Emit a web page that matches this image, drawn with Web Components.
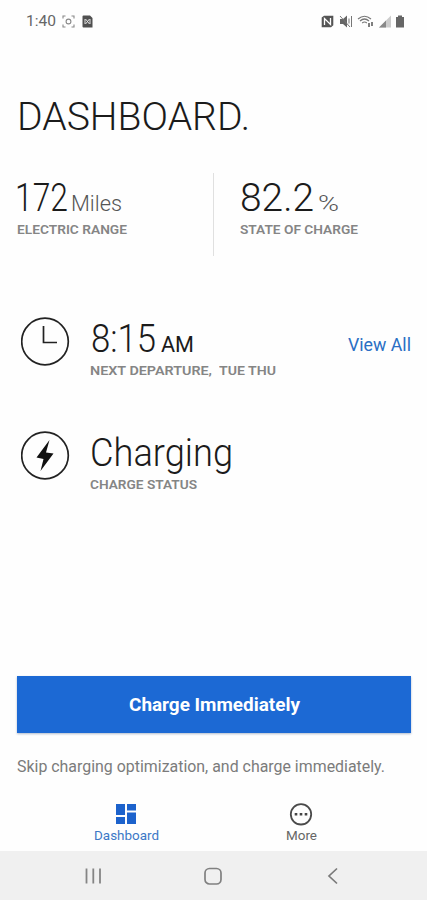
<!DOCTYPE html>
<html lang="en">
<head>
<meta charset="utf-8">
<meta name="viewport" content="width=device-width, initial-scale=1">
<title>Dashboard</title>
<style>
  html, body { margin: 0; height: 100%; }
  body { font-family: Roboto, "Liberation Sans", sans-serif; background: #fefefe; }
</style>
</head>
<body>
<charge-app></charge-app>

<script>
// Text set to a given width, so the proportions stay close to the brand typeface
class FitText extends HTMLElement {
  constructor() {
    super();
    this.attachShadow({ mode: 'open' });

    this.shadowRoot.innerHTML = `
      <style>
        :host { display: inline-block; white-space: nowrap; flex: none; }
        span { display: inline-block; transform-origin: 0 50%; }
      </style><span><slot></slot></span>`;
  }

  connectedCallback() {
    const span = this.shadowRoot.querySelector('span');
    const width = Number(this.getAttribute('width'));
    const natural = span.getBoundingClientRect().width;
    if (!width || !natural) return;

    this.style.width = `${width}px`;
    span.style.transform = `scaleX(${width / natural})`;
  }
}

class StatusBar extends HTMLElement {
  constructor() {
    super();
    this.attachShadow({ mode: 'open' });

    this.shadowRoot.innerHTML = `
      <style>
        :host {
          display: flex;
          justify-content: space-between;
          align-items: center;
          height: 42px;
          padding: 0 22px 0 26px;
          box-sizing: border-box;
          color: #666;
          font-size: 15px;
          line-height: 20px;
        }
        div { display: flex; align-items: center; gap: 6px; }
        .right { gap: 4.500px; }
        svg { display: block; }
      </style>
      <div>
        <fit-text width="30">1:40</fit-text>
        <svg width="13" height="13" viewBox="0 0 13 13" fill="none" stroke="#888" stroke-width="1.1">
          <path d="M1 3.5V1h2.500M9.500 1H12v2.500M12 9.500V12H9.500M3.500 12H1V9.500"/>
          <circle cx="6.500" cy="6.500" r="2.400"/>
        </svg>
        <svg style="margin-left:1px" width="11" height="13" viewBox="0 0 11 13">
          <path d="M1.500 .5H8L10.500 3v9.500h-9A1 1 0 0 1 .5 11.500v-10a1 1 0 0 1 1-1z" fill="#505050"/>
          <path d="M3.500 4l4 5M7.500 4l-4 5M3 4v5M8 4v5" stroke="#eee" stroke-width=".9"/>
        </svg>
      </div>
      <div class="right">
        <svg width="13" height="13" viewBox="0 0 13 13">
          <path d="M3 .7h9.300v9.600L10 12.300H.7V2.500z" fill="#555"/>
          <path d="M3.500 10V3.500l6 6V3" fill="none" stroke="#fff" stroke-width="1.300"/>
        </svg>
        <svg width="14" height="13" viewBox="0 0 14 13">
          <path d="M1 4h3l4-3.500v12L4 9H1z" fill="#666"/>
          <path d="M1 1l10 11M10 3.500v5M12.500 1v11" fill="none" stroke="#777" stroke-width="1"/>
        </svg>
        <svg width="17" height="13" viewBox="0 0 17 13" fill="none" stroke="#777" stroke-width="1.200">
          <path d="M1 4q6.500-5.500 13 0M3 6q4.500-4 9 0M5.200 8q2.300-2 4.600 0"/>
          <path d="M12 8v4M15 7v4" stroke="#555" stroke-width="1.500"/>
        </svg>
        <svg width="12" height="13" viewBox="0 0 12 13">
          <path d="M12 .5v12H0z" fill="#ccc"/>
          <path d="M7 5.500v7H0z" fill="#888"/>
        </svg>
        <svg width="10" height="13" viewBox="0 0 10 13">
          <path d="M3 .5h4v1.500h2v10.500H1V2h2z" fill="#666"/>
        </svg>
      </div>
    `;
  }
}

class MetricBlock extends HTMLElement {
  constructor() {
    super();
    this.attachShadow({ mode: 'open' });

    this.shadowRoot.innerHTML = `
      <style>
        :host { display: flex; flex-direction: column; gap: 3px; }
        .value {
          display: flex;
          align-items: baseline;
          height: 40px;
          color: #1b1b1b;
          font-size: 38px;
          font-weight: 300;
          line-height: 40px;
        }
        .label {
          display: flex;
          color: #858585;
          font-size: 13.500px;
          font-weight: 600;
          line-height: 16px;
          height: 16px;
        }
      </style>
      <div class="value"><slot name="value"></slot><slot name="unit"></slot></div>
      <div class="label"><slot></slot></div>
    `;
  }
}

class StatusRow extends HTMLElement {
  constructor() {
    super();
    this.attachShadow({ mode: 'open' });

    this.shadowRoot.innerHTML = `
      <style>
        :host { display: flex; align-items: flex-start; height: 60px; }
        .icon { width: 49px; flex: none; margin-right: 20px; }
        .body { flex: 1; padding-top: 2px; }
      </style>
      <div class="icon"><slot name="icon"></slot></div>
      <div class="body"><slot></slot></div>
      <slot name="action"></slot>
    `;
  }
}

class ActionButton extends HTMLElement {
  constructor() {
    super();
    this.attachShadow({ mode: 'open' });

    this.shadowRoot.innerHTML = `
      <style>
        :host { display: block; }
        button {
          display: flex;
          justify-content: center;
          align-items: center;
          width: 100%;
          height: 57px;
          padding: 0;
          border: 0;
          background: #1c69d4;
          color: #fff;
          font: bold 19px/24px Roboto, "Liberation Sans", sans-serif;
          box-shadow: 0 1px 2px rgba(28, 60, 110, 0.35);
        }
      </style>
      <button><slot></slot></button>
    `;
  }
}

class TabItem extends HTMLElement {
  constructor() {
    super();
    this.attachShadow({ mode: 'open' });

    this.shadowRoot.innerHTML = `
      <style>
        :host {
          display: flex;
          flex-direction: column;
          align-items: center;
          width: 175px;
          color: #666;
          font-size: 13px;
          line-height: 16px;
        }
        :host([active]) { color: #3b78c6; }
      </style>
      <slot name="icon"></slot>
      <slot></slot>
    `;
  }
}

class SystemNav extends HTMLElement {
  constructor() {
    super();
    this.attachShadow({ mode: 'open' });

    this.shadowRoot.innerHTML = `
      <style>
        :host {
          display: flex;
          justify-content: center;
          align-items: center;
          height: 49px;
          padding-right: 1px;
          background: #f0f0f0;
        }
        div { width: 120px; display: flex; justify-content: center; }
      </style>
      <div>
        <svg width="18" height="18" viewBox="0 0 18 18" stroke="#858585" stroke-width="1.800">
          <path d="M2.500 1.500v15M9.300 1.500v15M16 1.500v15"/>
        </svg>
      </div>
      <div>
        <svg width="18" height="18" viewBox="0 0 18 18" fill="none" stroke="#808080" stroke-width="1.700">
          <rect x="1" y="1.500" width="16" height="15.500" rx="4.500"/>
        </svg>
      </div>
      <div>
        <svg width="18" height="18" viewBox="0 0 18 18" fill="none" stroke="#7a7a7a" stroke-width="1.700">
          <path d="M13 1.500L5 9l8 7.500"/>
        </svg>
      </div>
    `;
  }
}

class ChargeApp extends HTMLElement {
  constructor() {
    super();
    this.attachShadow({ mode: 'open' });

    this.shadowRoot.innerHTML = `
      <style>
        :host {
          display: flex;
          flex-direction: column;
          width: 427px;
          height: 900px;
          margin: 0 auto;
          overflow: hidden;
          background: #fefefe;
        }
        main { flex: 1; display: flex; flex-direction: column; padding: 0 16px 0 17px; }
        h1 {
          margin: 55px 0 0;
          height: 40px;
          color: #1b1b1b;
          font-size: 38px;
          font-weight: 300;
          line-height: 40px;
        }
        svg { display: block; }
        .stats { display: flex; height: 83px; margin-top: 36px; }
        .stats metric-block { padding-top: 5px; }
        .stats metric-block:first-child { width: 196px; }
        .stats metric-block:last-child {
          border-left: 1px solid #e0e0e0;
          padding-left: 26px;
        }
        .unit { color: #555; font-size: 22px; }
        .am { color: #1b1b1b; font-size: 22px; font-weight: 400; }
        .rows { display: flex; flex-direction: column; gap: 54px; padding-left: 4px; margin-top: 61px; }
        .link { color: #2a6fc4; font-size: 17.500px; line-height: 20px; margin-top: 18px; }
        action-button { margin-top: auto; }
        p { margin: 24px 0 17px; height: 20px; color: #7b7b7b; font-size: 16.500px; line-height: 20px; }
        nav { display: flex; justify-content: center; height: 57px; padding-top: 8px; box-sizing: border-box; }
      </style>

      <status-bar></status-bar>

      <main>
        <h1><fit-text width="233">DASHBOARD.</fit-text></h1>

        <section class="stats">
          <metric-block>
            <fit-text slot="value" width="53" style="margin-left:-2px">172</fit-text>
            <fit-text slot="unit" class="unit" width="51" style="margin-left:3px">Miles</fit-text>
            <fit-text width="110">ELECTRIC RANGE</fit-text>
          </metric-block>
          <metric-block>
            <fit-text slot="value" width="74">82.2</fit-text>
            <fit-text slot="unit" class="unit" width="21" style="margin-left:4px">%</fit-text>
            <fit-text width="118">STATE OF CHARGE</fit-text>
          </metric-block>
        </section>

        <section class="rows">
          <status-row>
            <svg slot="icon" width="49" height="49" viewBox="0 0 49 49" fill="none" stroke="#222" stroke-width="1.700">
              <circle cx="24" cy="24.500" r="23.300"/>
              <path d="M22.500 9v16.500H36"/>
            </svg>
            <metric-block>
              <fit-text slot="value" width="65" style="margin-left:1px">8:15</fit-text>
              <fit-text slot="unit" class="am" width="33" style="margin-left:5px">AM</fit-text>
              <fit-text width="122">NEXT DEPARTURE,</fit-text><fit-text width="57" style="margin-left:7px">TUE THU</fit-text>
            </metric-block>
            <fit-text slot="action" class="link" width="63">View All</fit-text>
          </status-row>

          <status-row>
            <svg slot="icon" width="49" height="49" viewBox="0 0 49 49">
              <circle cx="24" cy="24.500" r="23.300" fill="none" stroke="#222" stroke-width="1.700"/>
              <path d="M28.500 9L15.500 26.500l7 1.500-3 12L32.500 22.500l-7.500-1z" fill="#111"/>
            </svg>
            <metric-block>
              <fit-text slot="value" width="143">Charging</fit-text>
              <fit-text width="107">CHARGE STATUS</fit-text>
            </metric-block>
          </status-row>
        </section>

        <action-button><fit-text width="171">Charge Immediately</fit-text></action-button>
        <p><fit-text width="368">Skip charging optimization, and charge immediately.</fit-text></p>
      </main>

      <nav>
        <tab-item active>
          <svg slot="icon" width="24" height="26" viewBox="0 0 24 26" fill="#1c62cc">
            <path d="M2 2h9v11H2zM13 2h9v6.500h-9zM2 15h9v7H2zM13 10.500h9V22h-9z"/>
          </svg>
          <fit-text width="65">Dashboard</fit-text>
        </tab-item>
        <tab-item>
          <svg slot="icon" width="24" height="26" viewBox="0 0 24 26">
            <circle cx="12" cy="12.300" r="10.200" fill="none" stroke="#4a4a4a" stroke-width="1.800"/>
            <path d="M5.700 11h2.600v2.400H5.700zM10.700 11h2.600v2.400h-2.600zM15.700 11h2.600v2.400h-2.600z" fill="#444"/>
          </svg>
          <fit-text width="31">More</fit-text>
        </tab-item>
      </nav>

      <system-nav></system-nav>
    `;
  }
}

customElements.define('status-bar', StatusBar);
customElements.define('metric-block', MetricBlock);
customElements.define('status-row', StatusRow);
customElements.define('action-button', ActionButton);
customElements.define('tab-item', TabItem);
customElements.define('system-nav', SystemNav);
customElements.define('charge-app', ChargeApp);
// last, so every container is laid out before the text is measured
customElements.define('fit-text', FitText);
</script>
</body>
</html>
